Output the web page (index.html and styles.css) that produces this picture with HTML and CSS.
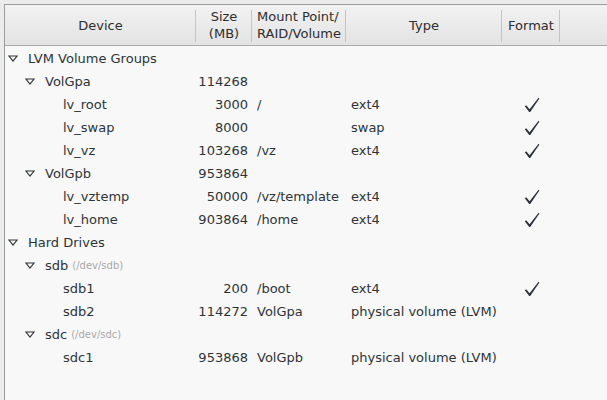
FILE: index.html
```html
<!DOCTYPE html>
<html>
<head>
<meta charset="utf-8">
<link rel="stylesheet" href="styles.css">
</head>
<body>
<div class="frame">
  <div class="panel">
    <div class="head">
      <div class="hc c-dev">Device</div>
      <div class="hc c-size">Size<br>(MB)</div>
      <div class="hc c-mnt">Mount Point/<br>RAID/Volume</div>
      <div class="hc c-type">Type</div>
      <div class="hc c-fmt">Format</div>
      <div class="hc c-rest"></div>
    </div>
    <div class="rows">
      <div class="row"><div class="dev l0"><svg class="tri" viewBox="0 0 10 7"><polygon points="1,1 9,1 5,6"/></svg>LVM Volume Groups</div><div class="size"></div><div class="mnt"></div><div class="type"></div><div class="fmt"></div></div>
      <div class="row"><div class="dev l1"><svg class="tri" viewBox="0 0 10 7"><polygon points="1,1 9,1 5,6"/></svg>VolGpa</div><div class="size">114268</div><div class="mnt"></div><div class="type"></div><div class="fmt"></div></div>
      <div class="row"><div class="dev l2">lv_root</div><div class="size">3000</div><div class="mnt">/</div><div class="type">ext4</div><div class="fmt"><svg class="chk" viewBox="0 0 16 16"><path d="M0.8,9.2 L2.2,8.3 L5.6,12.3 L14.6,0.8 L15.4,1.4 L6.2,15 L5.2,15 Z"/></svg></div></div>
      <div class="row"><div class="dev l2">lv_swap</div><div class="size">8000</div><div class="mnt"></div><div class="type">swap</div><div class="fmt"><svg class="chk" viewBox="0 0 16 16"><path d="M0.8,9.2 L2.2,8.3 L5.6,12.3 L14.6,0.8 L15.4,1.4 L6.2,15 L5.2,15 Z"/></svg></div></div>
      <div class="row"><div class="dev l2">lv_vz</div><div class="size">103268</div><div class="mnt">/vz</div><div class="type">ext4</div><div class="fmt"><svg class="chk" viewBox="0 0 16 16"><path d="M0.8,9.2 L2.2,8.3 L5.6,12.3 L14.6,0.8 L15.4,1.4 L6.2,15 L5.2,15 Z"/></svg></div></div>
      <div class="row"><div class="dev l1"><svg class="tri" viewBox="0 0 10 7"><polygon points="1,1 9,1 5,6"/></svg>VolGpb</div><div class="size">953864</div><div class="mnt"></div><div class="type"></div><div class="fmt"></div></div>
      <div class="row"><div class="dev l2">lv_vztemp</div><div class="size">50000</div><div class="mnt">/vz/template</div><div class="type">ext4</div><div class="fmt"><svg class="chk" viewBox="0 0 16 16"><path d="M0.8,9.2 L2.2,8.3 L5.6,12.3 L14.6,0.8 L15.4,1.4 L6.2,15 L5.2,15 Z"/></svg></div></div>
      <div class="row"><div class="dev l2">lv_home</div><div class="size">903864</div><div class="mnt">/home</div><div class="type">ext4</div><div class="fmt"><svg class="chk" viewBox="0 0 16 16"><path d="M0.8,9.2 L2.2,8.3 L5.6,12.3 L14.6,0.8 L15.4,1.4 L6.2,15 L5.2,15 Z"/></svg></div></div>
      <div class="row"><div class="dev l0"><svg class="tri" viewBox="0 0 10 7"><polygon points="1,1 9,1 5,6"/></svg>Hard Drives</div><div class="size"></div><div class="mnt"></div><div class="type"></div><div class="fmt"></div></div>
      <div class="row"><div class="dev l1"><svg class="tri" viewBox="0 0 10 7"><polygon points="1,1 9,1 5,6"/></svg>sdb <span class="path">(/dev/sdb)</span></div><div class="size"></div><div class="mnt"></div><div class="type"></div><div class="fmt"></div></div>
      <div class="row"><div class="dev l2">sdb1</div><div class="size">200</div><div class="mnt">/boot</div><div class="type">ext4</div><div class="fmt"><svg class="chk" viewBox="0 0 16 16"><path d="M0.8,9.2 L2.2,8.3 L5.6,12.3 L14.6,0.8 L15.4,1.4 L6.2,15 L5.2,15 Z"/></svg></div></div>
      <div class="row"><div class="dev l2">sdb2</div><div class="size">114272</div><div class="mnt">VolGpa</div><div class="type">physical volume (LVM)</div><div class="fmt"></div></div>
      <div class="row"><div class="dev l1"><svg class="tri" viewBox="0 0 10 7"><polygon points="1,1 9,1 5,6"/></svg>sdc <span class="path">(/dev/sdc)</span></div><div class="size"></div><div class="mnt"></div><div class="type"></div><div class="fmt"></div></div>
      <div class="row"><div class="dev l2">sdc1</div><div class="size">953868</div><div class="mnt">VolGpb</div><div class="type">physical volume (LVM)</div><div class="fmt"></div></div>
    </div>
  </div>
</div>
</body>
</html>
```
FILE: styles.css
```css
html, body {
  margin: 0;
  padding: 0;
  height: 100%;
  background: #ececec;
  font-family: "DejaVu Sans", sans-serif;
  font-size: 13px;
  color: #2e3436;
}
.frame {
  box-sizing: border-box;
  height: 100%;
  padding: 4px 0 0 4px;
}
.panel {
  box-sizing: border-box;
  height: 100%;
  background: #f8f8f8;
  border-left: 1px solid #9c9c9c;
  border-top: 1px solid #9c9c9c;
}
.head {
  display: grid;
  grid-template-columns: 191px 56px 94px 156px 58px 1fr;
  height: 40px;
  background: linear-gradient(#f2f2f2, #e3e3e3);
  border-bottom: 1px solid #a8a8a8;
}
.hc {
  display: flex;
  align-items: center;
  justify-content: center;
  text-align: center;
  line-height: 17px;
  color: #2e2e2e;
  position: relative;
}
.hc::after {
  content: "";
  position: absolute;
  right: 0;
  top: 5px;
  bottom: 3px;
  width: 1px;
  background: #c4c4c4;
}
.hc.c-rest::after { display: none; }
.c-mnt { justify-content: flex-start; text-align: left; padding-left: 5px; }
.rows {
  padding-top: 1px;
}
.row {
  display: grid;
  grid-template-columns: 191px 56px 94px 156px 58px;
  height: 23px;
  align-items: center;
  white-space: nowrap;
}
.dev {
  display: flex;
  align-items: center;
}
.l0 { padding-left: 23px; }
.l1 { padding-left: 40px; }
.l2 { padding-left: 58px; }
.tri {
  width: 10px;
  height: 7px;
  margin-left: -20px;
  margin-right: 10px;
  fill: none;
  stroke: #2e3436;
  stroke-width: 1.1;
}
.path {
  font-size: 10px;
  color: #a8a8a8;
  margin-left: 4px;
}
.size { text-align: right; padding-right: 4px; }
.mnt { padding-left: 5px; }
.type { padding-left: 5px; }
.fmt {
  display: flex;
  justify-content: center;
  padding-left: 2px;
  padding-top: 1px;
}
.chk {
  width: 16px;
  height: 16px;
  fill: #2a2f3a;
}
```
